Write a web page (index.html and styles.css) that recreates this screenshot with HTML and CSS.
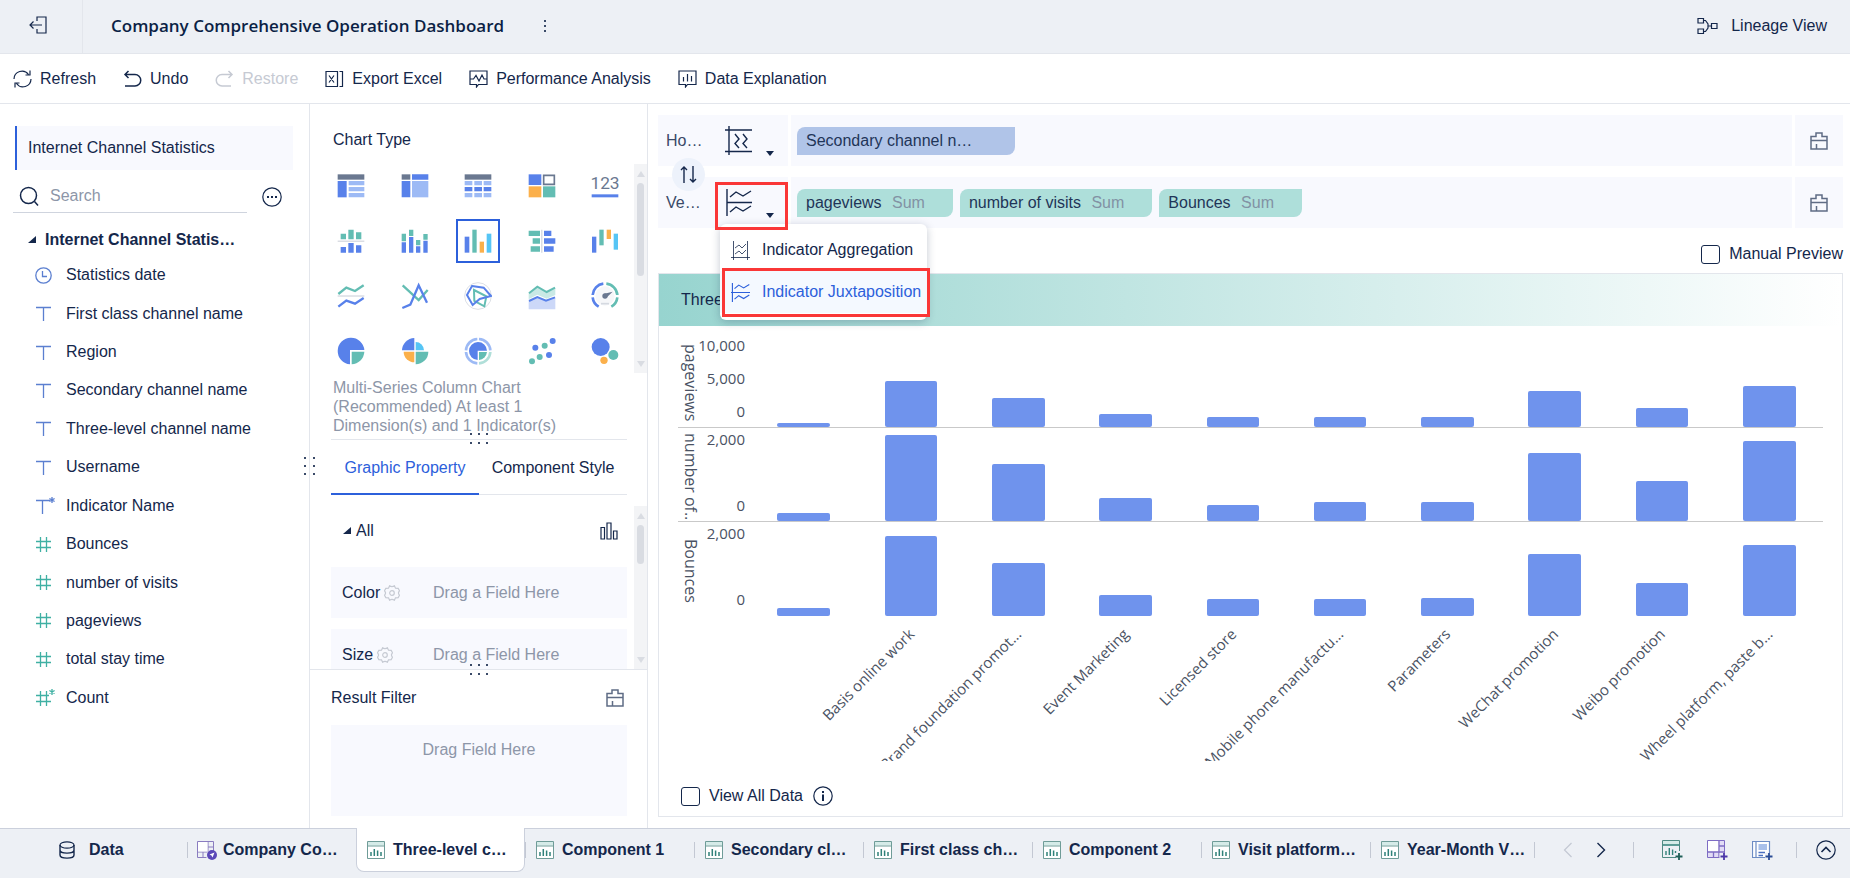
FILE: index.html
```html
<!DOCTYPE html>
<html lang="en">
	<head>
		<meta charset="utf-8">
		<title>Company Comprehensive Operation Dashboard</title>
		<link rel="stylesheet" href="styles.css">
	</head>
	<body>
		<svg class="sprite" aria-hidden="true">
			<symbol id="i-text" viewBox="0 0 17 17"><path d="M1 2.500h15M8.500 2.500V16"/></symbol>
			<symbol id="i-text-star" viewBox="0 0 20 17"><path d="M1 3.500h14M7.500 3.500V17M17 0v6M14.400 1.500l5.200 3M19.600 1.500l-5.200 3"/></symbol>
			<symbol id="i-hash" viewBox="0 0 17 17"><path d="M1 5.500h15M1 11.500h15M5.500 1v15M11.500 1v15"/></symbol>
			<symbol id="i-hash-star" viewBox="0 0 20 17"><path d="M1 6.500h13M1 12.500h15M5.500 2v15M11.500 2v15M17 0v6M14.400 1.500l5.200 3M19.600 1.500l-5.200 3"/></symbol>
			<symbol id="i-clean" viewBox="0 0 18 18"><path d="M1 4.500h5v-3.500h6v3.500h5v12.500H1zM1 8.500h16M6.500 17V12"/></symbol>
			<symbol id="i-gear" viewBox="0 0 16 16"><path d="M5.600 .8Q8 2.400 10.400 .8L11.500 3.200L14.200 3.400L15.500 5.800Q13.400 8 15.500 10.200L14.200 12.600L11.500 12.800L10.400 15.200Q8 13.600 5.600 15.200L4.500 12.800L1.800 12.600L.5 10.200Q2.600 8 .5 5.800L1.800 3.400L4.500 3.200z"/><circle cx="8" cy="8" r="2.300"/></symbol>
			<symbol id="i-component" viewBox="0 0 18 18"><path d="M.5.500h17v17H.5z" fill="#fff" stroke="#6f9c98"/><path d="M1 1h16v3.500H1z" fill="#d5ebe8" stroke="none"/><path d="M1 5h16" stroke="#6f9c98"/><path d="M4 11v4M7.300 8v7M10.600 9.500V15M14 11v4" stroke="#2f8179" stroke-width="1.500"/></symbol>
			<symbol id="i-juxta" viewBox="0 0 27 27"><path d="M2 0v27M0 13.500h27M5 8l6-5 7 4 8-5M5 23l6-5 7 4 8-5" stroke-width="1.600"/></symbol>
		</svg>

		<header class="header">
			<button class="exit" aria-label="Exit">
				<svg class="icon" width="18" height="18" viewBox="0 0 18 18"><path d="M8 5V1h9v16H8v-4M13 9H1M4.500 5.500L1 9l3.500 3.500"/></svg>
			</button>
			<h1>Company Comprehensive Operation Dashboard</h1>
			<button class="more" aria-label="More">
				<svg width="4" height="14" viewBox="0 0 4 14"><path d="M1 1h2v2H1zM1 6h2v2H1zM1 11h2v2H1z" fill="#3a4a68"/></svg>
			</button>
			<a class="lineage" href="#">
				<svg class="icon" width="21" height="18" viewBox="0 0 21 18"><path d="M1 1.500h5.500v4.500H1zM1 12h5.500v4.500H1zM14.500 6.500H20v5h-5.500zM6.500 3.500h2l2.500 3.500v4l-2.500 3.500h-2M11 9h3.500"/></svg>
				Lineage View
			</a>
		</header>

		<nav class="toolbar">
			<button><svg class="icon" width="19" height="18" viewBox="0 0 19 18"><path d="M1 9a8 8 0 0 1 14.500-4.500M18 9A8 8 0 0 1 3.500 13.500M17 .5V5h-4.500M2 17.500V13h4.500"/></svg>Refresh</button>
			<button><svg class="icon" width="19" height="18" viewBox="0 0 19 18"><path d="M5.500 1L2 4.500 5.500 8M2 4.500h10a5.700 5.700 0 0 1 0 11.500H2" stroke-width="1.500"/></svg>Undo</button>
			<button disabled><svg class="icon" width="19" height="18" viewBox="0 0 19 18"><path d="M13.500 1L17 4.500 13.500 8M17 4.500H7a5.700 5.700 0 0 0 0 11.500h9" stroke-width="1.500"/></svg>Restore</button>
			<button><svg class="icon" width="19" height="18" viewBox="0 0 19 18"><path d="M1 1.500h11.500v15H1zM14.500 1.500h3v15h-3M4 5.500l5 7M9 5.500l-5 7"/></svg>Export Excel</button>
			<button><svg class="icon" width="19" height="18" viewBox="0 0 19 18"><path d="M1 1h17v13.500h-8.500L7.500 17v-2.500H1zM1 9h3.500L7 5.500l3 5.500 3-6 2 4h3"/></svg>Performance Analysis</button>
			<button><svg class="icon" width="19" height="18" viewBox="0 0 19 18"><path d="M1 1h17v13.500h-8.500L7.500 17v-2.500H1zM5.500 7v4.500M9.500 4v7.500M13.500 6v5.500"/></svg>Data Explanation</button>
		</nav>

		<main class="main">
			<!-- data fields -->
			<aside class="fields">
				<a class="dataset" href="#">Internet Channel Statistics</a>
				<div class="search">
					<label class="search-box">
						<svg class="icon" width="21" height="21" viewBox="0 0 21 21"><circle cx="9.500" cy="9.500" r="8" stroke-width="1.500"/><path d="M15.500 15.500L19 19.500" stroke-width="1.500"/></svg>
						<input type="text" placeholder="Search" aria-label="Search">
					</label>
					<button aria-label="More options">
						<svg class="icon" width="20" height="20" viewBox="0 0 20 20"><circle cx="10" cy="10" r="9.200"/><path d="M5 9h2v2H5zM9 9h2v2H9zM13 9h2v2h-2z" fill="#14274b" stroke="none"/></svg>
					</button>
				</div>
				<h2 class="group"><svg width="8" height="8" viewBox="0 0 8 8"><path d="M8 0v7H0z" fill="#14274b"/></svg>Internet Channel Statis…</h2>
				<ul class="field-list">
					<li><svg class="dim" width="17" height="17" viewBox="0 0 17 17"><circle cx="8.500" cy="8.500" r="7.700"/><path d="M7.500 4v5.500H12"/></svg>Statistics date</li>
					<li><svg class="dim" width="17" height="17"><use href="#i-text"/></svg>First class channel name</li>
					<li><svg class="dim" width="17" height="17"><use href="#i-text"/></svg>Region</li>
					<li><svg class="dim" width="17" height="17"><use href="#i-text"/></svg>Secondary channel name</li>
					<li><svg class="dim" width="17" height="17"><use href="#i-text"/></svg>Three-level channel name</li>
					<li><svg class="dim" width="17" height="17"><use href="#i-text"/></svg>Username</li>
					<li><svg class="dim" width="20" height="17"><use href="#i-text-star"/></svg>Indicator Name</li>
					<li><svg class="num" width="17" height="17"><use href="#i-hash"/></svg>Bounces</li>
					<li><svg class="num" width="17" height="17"><use href="#i-hash"/></svg>number of visits</li>
					<li><svg class="num" width="17" height="17"><use href="#i-hash"/></svg>pageviews</li>
					<li><svg class="num" width="17" height="17"><use href="#i-hash"/></svg>total stay time</li>
					<li><svg class="num" width="20" height="17"><use href="#i-hash-star"/></svg>Count</li>
				</ul>
				<svg class="grip-side" width="11" height="18" viewBox="0 0 11 18"><path d="M0 0h2v2H0zM9 0h2v2H9zM0 8h2v2H0zM9 8h2v2H9zM0 16h2v2H0zM9 16h2v2H9z"/></svg>
			</aside>

			<!-- chart settings -->
			<section class="settings">
				<h2 class="section-title">Chart Type</h2>
				<div class="scroll-row">
					<div class="types">
						<button aria-label="Group table"><svg viewBox="0 0 84 84"><path fill="#6a7890" d="M2 7h80v16H2z"/><path fill="#5881ea" d="M2 27h27v49H2z"/><path fill="#9dbaf5" d="M35 27h47v13H35zM35 45h47v13H35zM35 63h47v13H35z"/></svg></button>
						<button aria-label="Cross table"><svg viewBox="0 0 84 84"><path fill="#6a7890" d="M2 7h26v16H2z"/><path fill="#5881ea" d="M33 7h49v16H33zM2 27h26v49H2z"/><path fill="#9dbaf5" d="M33 27h49v49H33z"/></svg></button>
						<button aria-label="Detail table"><svg viewBox="0 0 84 84"><path fill="#6a7890" d="M2 7h80v16H2z"/><path fill="#9dbaf5" d="M2 27h23v13H2zM31 27h23v13H31zM59 27h23v13H59zM2 63h23v13H2zM31 63h23v13H31zM59 63h23v13H59z"/><path fill="#5881ea" d="M2 45h23v13H2zM31 45h23v13H31zM59 45h23v13H59z"/></svg></button>
						<button aria-label="Color table"><svg viewBox="0 0 84 84"><path fill="#5881ea" d="M2 7h38v32H2z"/><path fill="#fff" stroke="#6a7890" stroke-width="5" d="M47 10h32v27H47z"/><path fill="#fbb04b" d="M2 43h38v33H2z"/><path fill="#63bdb3" d="M45 43h37v33H45z"/></svg></button>
						<button aria-label="KPI card"><svg viewBox="0 0 84 84"><text x="42" y="52" text-anchor="middle" font-size="52" fill="#6a7890">123</text><path fill="#5881ea" d="M2 67h80v9H2z"/></svg></button>

						<button aria-label="Partition column chart"><svg viewBox="0 0 84 84"><path fill="#63bdb3" d="M11 20h16v17H11zM34 8h16v29H34zM57 16h16v21H57z"/><path fill="#c8ccd6" d="M2 41h80v3H2z"/><path fill="#5881ea" d="M11 60h16v17H11zM34 48h16v29H34zM57 55h16v22H57z"/></svg></button>
						<button aria-label="Stacked column chart"><svg viewBox="0 0 84 84"><path fill="#63bdb3" d="M2 20h13v23H2zM24 8h13v19H24zM45 39h13v16H45zM67 21h13v17H67z"/><path fill="#5881ea" d="M2 46h13v31H2zM24 30h13v47H24zM45 58h13v19H45zM67 41h13v36H67z"/></svg></button>
						<button class="selected" aria-label="Multi-series column chart"><svg viewBox="0 0 84 84"><path fill="#5881ea" d="M2 29h14v48H2z"/><path fill="#63bdb3" d="M25 8h13v69H25z"/><path fill="#fbb04b" d="M47 44h13v33H47z"/><path fill="#56c5f5" d="M68 20h14v57H68z"/></svg></button>
						<button aria-label="Tornado chart"><svg viewBox="0 0 84 84"><path fill="#63bdb3" d="M2 11h34v16H2zM14 34h22v16H14zM8 58h28v16H8z"/><path fill="#c8ccd6" d="M40 8h3v69h-3z"/><path fill="#5881ea" d="M48 11h22v16H48zM48 34h34v16H48zM48 58h29v16H48z"/></svg></button>
						<button aria-label="Waterfall chart"><svg viewBox="0 0 84 84"><path fill="#5881ea" d="M3 29h13v48H3z"/><path fill="#63bdb3" d="M25 8h13v47H25z"/><path fill="#fbb04b" d="M47 8h13v28H47z"/><path fill="#56c5f5" d="M68 20h13v48H68z"/></svg></button>

						<button aria-label="Partition line chart"><svg viewBox="0 0 84 84" fill="none" stroke-width="7"><path stroke="#63bdb3" d="M4 36l24-19 26 10 26-17"/><path stroke="#c8ccd6" stroke-width="3" d="M2 42h80"/><path stroke="#5881ea" d="M4 74l24-18 26 9 26-17"/></svg></button>
						<button aria-label="Line chart"><svg viewBox="0 0 84 84" fill="none" stroke-width="7"><path stroke="#63bdb3" d="M5 10l48 44 27-30"/><path stroke="#5881ea" d="M4 78l24-10 25-58 25 52"/></svg></button>
						<button aria-label="Radar chart"><svg viewBox="0 0 84 84" fill="none" stroke-width="6"><circle cx="42" cy="42" r="40" stroke="#dcdfe6" stroke-width="3"/><path stroke="#63bdb3" d="M30 24l37 19-6 30-30-16z"/><path stroke="#5881ea" d="M24 12l35 5 22 25-34 9-21 18L9 39z"/></svg></button>
						<button aria-label="Area chart"><svg viewBox="0 0 84 84" fill="none" stroke-width="6"><path fill="#c9e9e5" d="M2 34l26-20 28 16 26-13v22L56 50 28 38 2 52z"/><path fill="#ccd8f8" d="M2 57l26-12 26 11 28-10v36H2z"/><path stroke="#63bdb3" d="M3 34l25-20 28 16 25-13"/><path stroke="#5881ea" d="M3 57l25-12 26 11 27-10"/></svg></button>
						<button aria-label="Gauge"><svg viewBox="0 0 84 84" fill="none"><circle cx="42" cy="42" r="29" fill="#f6f7f9"/><path stroke="#5881ea" stroke-width="8" d="M5 39A37 37 0 0 1 37 5M5 46a37 37 0 0 0 18 28"/><path stroke="#63bdb3" stroke-width="8" d="M46 5a37 37 0 0 1 33 34M79 46a37 37 0 0 1-18 28"/><path fill="#6a7890" d="M40 35l25-6-19 18z"/><circle cx="42" cy="42" r="8" fill="#6a7890"/><path stroke="#d5d9e0" stroke-width="5" d="M30 65h24"/></svg></button>

						<button aria-label="Pie chart"><svg viewBox="0 0 84 84"><path fill="#5881ea" d="M82 39A40 40 0 1 0 39 82V39z"/><path fill="#63bdb3" d="M44 44h38a40 40 0 0 1-38 38z"/></svg></button>
						<button aria-label="Rose chart"><svg viewBox="0 0 84 84"><path fill="#5881ea" d="M40 40V3A38 38 0 0 0 3 40z"/><path fill="#56c5f5" d="M44 40V15a25 25 0 0 1 25 25z"/><path fill="#fbb04b" d="M40 44H8a32 32 0 0 0 32 32z"/><path fill="#63bdb3" d="M44 44h38a38 38 0 0 1-38 38z"/></svg></button>
						<button aria-label="Donut chart"><svg viewBox="0 0 84 84"><g fill="none" stroke-width="8"><path stroke="#9dbaf5" d="M40 6A36 36 0 0 0 6 40M6 45a36 36 0 0 0 34 34M45 6a36 36 0 0 1 34 34"/><path stroke="#b0dfd9" d="M79 45a36 36 0 0 1-34 34"/></g><path fill="#5881ea" d="M69 41a27 27 0 1 0-28 28V41z"/><path fill="#63bdb3" d="M45 45h24a27 27 0 0 1-24 24z"/></svg></button>
						<button aria-label="Scatter chart"><svg viewBox="0 0 84 84"><g fill="#63bdb3"><circle cx="12" cy="73" r="9"/><circle cx="35" cy="60" r="9"/><circle cx="50" cy="26" r="9"/></g><g fill="#5881ea"><circle cx="22" cy="32" r="9"/><circle cx="63" cy="54" r="9"/><circle cx="74" cy="12" r="9"/></g></svg></button>
						<button aria-label="Bubble chart"><svg viewBox="0 0 84 84"><circle cx="29" cy="30" r="27" fill="#5881ea"/><circle cx="67" cy="54" r="15" fill="#63bdb3"/><circle cx="39" cy="70" r="11" fill="#fbb04b"/></svg></button>
					</div>
					<div class="scrollbar"><span class="arrow-up"></span><span class="thumb thumb-long"></span><span class="arrow-down"></span></div>
				</div>
				<div class="hint">
					<p>Multi-Series Column Chart (Recommended) At least 1 Dimension(s) and 1 Indicator(s)</p>
					<svg class="grip" width="18" height="11" viewBox="0 0 18 11"><path d="M0 0h2v2H0zM8 0h2v2H8zM16 0h2v2h-2zM0 9h2v2H0zM8 9h2v2H8zM16 9h2v2h-2z"/></svg>
				</div>
				<div class="tabs">
					<button class="active">Graphic Property</button>
					<button>Component Style</button>
				</div>
				<div class="scroll-row properties">
					<div class="property-list">
						<div class="all">
							<svg width="8" height="8" viewBox="0 0 8 8"><path d="M8 0v7H0z" fill="#14274b"/></svg>
							<span>All</span>
							<svg class="icon" width="18" height="18" viewBox="0 0 18 18"><path d="M1 5.500h3.500v11.500H1zM7 1h4v16H7zM13.500 9H17v8h-3.500z"/></svg>
						</div>
						<div class="property"><span class="name">Color <svg class="gear" width="16" height="16"><use href="#i-gear"/></svg></span><span class="drop">Drag a Field Here</span></div>
						<div class="property"><span class="name">Size <svg class="gear" width="16" height="16"><use href="#i-gear"/></svg></span><span class="drop">Drag a Field Here</span></div>
					</div>
					<div class="scrollbar"><span class="arrow-up"></span><span class="thumb"></span><span class="arrow-down"></span></div>
				</div>
				<div class="filter">
					<svg class="grip" width="18" height="11" viewBox="0 0 18 11"><path d="M0 0h2v2H0zM8 0h2v2H8zM16 0h2v2h-2zM0 9h2v2H0zM8 9h2v2H8zM16 9h2v2h-2z"/></svg>
					<div class="filter-head">
						<h2>Result Filter</h2>
						<button class="clean" aria-label="Clear filter"><svg width="18" height="18"><use href="#i-clean"/></svg></button>
					</div>
					<div class="filter-drop">Drag Field Here</div>
				</div>
			</section>

			<!-- axes and preview -->
			<section class="work">
				<div class="axis-row">
					<div class="axis-name">
						<span>Ho…</span>
						<button class="axis-mode" aria-label="Horizontal axis mode">
							<svg class="icon" width="27" height="29" viewBox="0 0 27 29"><path d="M4 0v29M0 4h27M0 25.500h27M10 8l4 5-4 4.500 4 4.500M18 8l4 5-4 4.500 4 4.500" stroke-width="1.400"/></svg>
							<span class="caret"></span>
						</button>
					</div>
					<div class="axis-fields"><span class="pill pill-dim">Secondary channel n…</span></div>
					<button class="clean" aria-label="Clear horizontal axis"><svg width="18" height="18"><use href="#i-clean"/></svg></button>
				</div>
				<div class="axis-row">
					<button class="swap" aria-label="Swap axes"><svg class="icon" width="17" height="17" viewBox="0 0 17 17"><path d="M4 17V1M1 4l3-3 3 3M13 0v16M10 13l3 3 3-3" stroke-width="1.400"/></svg></button>
					<div class="axis-name">
						<span>Ve…</span>
						<button class="axis-mode" aria-label="Vertical axis mode">
							<svg class="icon" width="27" height="27" viewBox="0 0 27 27"><path d="M2 0v27M2 13.500h25M5 8l6-5 7 4 8-5M5 23l6-5 7 4 8-5" stroke-width="1.400"/></svg>
							<span class="caret"></span>
						</button>
						<div class="menu">
							<button><svg class="icon" width="19" height="19" viewBox="0 0 19 19"><path d="M2.500 0v19M16.500 0v19M0 16.500h19M4 7l4-3 3 3 4-4M4 13l4-3 3 3 4-4" stroke-width=".8"/></svg>Indicator Aggregation</button>
							<button class="current"><svg class="icon" width="19" height="19"><use href="#i-juxta"/></svg>Indicator Juxtaposition</button>
							<span class="mark mark-item"></span>
						</div>
						<span class="mark mark-mode"></span>
					</div>
					<div class="axis-fields">
						<span class="pill">pageviews <em>Sum</em></span>
						<span class="pill">number of visits <em>Sum</em></span>
						<span class="pill">Bounces <em>Sum</em></span>
					</div>
					<button class="clean" aria-label="Clear vertical axis"><svg width="18" height="18"><use href="#i-clean"/></svg></button>
				</div>
				<div class="preview">
					<label class="check"><input type="checkbox">Manual Preview</label>
				</div>

				<div class="panel">
					<h2 class="panel-title">Three</h2>
					<div class="chart">
						<div class="chart-row">
							<span class="measure">pageviews</span>
							<div class="ticks"><span>10,000</span><span>5,000</span><span>0</span></div>
							<div class="bars">
								<i style="height: 4px"></i><i style="height: 46px"></i><i style="height: 29px"></i><i style="height: 13px"></i><i style="height: 10px"></i>
								<i style="height: 10px"></i><i style="height: 10px"></i><i style="height: 36px"></i><i style="height: 19px"></i><i style="height: 41px"></i>
							</div>
						</div>
						<div class="chart-row">
							<span class="measure">number of..</span>
							<div class="ticks"><span>2,000</span><span>0</span></div>
							<div class="bars">
								<i style="height: 8px"></i><i style="height: 86px"></i><i style="height: 57px"></i><i style="height: 23px"></i><i style="height: 16px"></i>
								<i style="height: 19px"></i><i style="height: 19px"></i><i style="height: 68px"></i><i style="height: 40px"></i><i style="height: 80px"></i>
							</div>
						</div>
						<div class="chart-row">
							<span class="measure">Bounces</span>
							<div class="ticks"><span>2,000</span><span>0</span></div>
							<div class="bars">
								<i style="height: 8px"></i><i style="height: 80px"></i><i style="height: 53px"></i><i style="height: 21px"></i><i style="height: 17px"></i>
								<i style="height: 17px"></i><i style="height: 18px"></i><i style="height: 62px"></i><i style="height: 33px"></i><i style="height: 71px"></i>
							</div>
						</div>
						<div class="categories">
							<div></div>
							<div><span>Basis online work</span></div>
							<div><span>Brand foundation promot...</span></div>
							<div><span>Event Marketing</span></div>
							<div><span>Licensed store</span></div>
							<div><span>Mobile phone manufactu...</span></div>
							<div><span>Parameters</span></div>
							<div><span>WeChat promotion</span></div>
							<div><span>Weibo promotion</span></div>
							<div><span>Wheel platform, paste b...</span></div>
						</div>
					</div>
					<div class="panel-foot">
						<label class="check"><input type="checkbox">View All Data</label>
						<svg class="icon" width="20" height="20" viewBox="0 0 20 20"><circle cx="10" cy="10" r="9.200"/><path d="M9 5h2v2H9zM9 8.500h2V15H9z" fill="#14274b" stroke="none"/></svg>
					</div>
				</div>
			</section>
		</main>

		<!-- sheets -->
		<footer class="sheets">
			<button class="data">
				<svg class="icon" width="16" height="18" viewBox="0 0 16 18"><ellipse cx="8" cy="4" rx="7" ry="3.200"/><path d="M1 4v10c0 4.200 14 4.200 14 0V4M1 9c0 4.200 14 4.200 14 0" stroke-width="1.400"/></svg>
				Data
			</button>
			<div class="sheet-list">
				<button class="first"><svg width="20" height="19" viewBox="0 0 20 19"><path d="M.5.500h16V11M.5.500v16h9M11 .5v10M.5 11h10M11 6h5.500M6 11v5.500" fill="none" stroke="#8a7cc0"/><path d="M1 1h9.500v9.500H1z" fill="#fff"/><circle cx="15" cy="14" r="5" fill="#5a48b8"/><path d="M12.500 13.500l5-2-2 5-1-2z" fill="#fff"/></svg>Company Co…</button>
				<button class="active"><svg width="18" height="18"><use href="#i-component"/></svg>Three-level c…</button>
				<button><svg width="18" height="18"><use href="#i-component"/></svg>Component 1</button>
				<button><svg width="18" height="18"><use href="#i-component"/></svg>Secondary cl…</button>
				<button><svg width="18" height="18"><use href="#i-component"/></svg>First class ch…</button>
				<button><svg width="18" height="18"><use href="#i-component"/></svg>Component 2</button>
				<button><svg width="18" height="18"><use href="#i-component"/></svg>Visit platform…</button>
				<button class="last"><svg width="18" height="18"><use href="#i-component"/></svg>Year-Month V…</button>
			</div>
			<div class="pager">
				<button disabled aria-label="Previous"><svg class="icon" width="10" height="16" viewBox="0 0 10 16"><path d="M8.500 1l-7 7 7 7"/></svg></button>
				<button aria-label="Next"><svg class="icon" width="10" height="16" viewBox="0 0 10 16"><path d="M1.500 1l7 7-7 7" stroke-width="1.400"/></svg></button>
			</div>
			<div class="adders">
				<button aria-label="Add component"><svg width="21" height="20" viewBox="0 0 21 20"><path d="M17.500 11V.5H.5v17H14" fill="none" stroke="#4f8a84"/><path d="M1 1h16v3.500H1z" fill="#d5ebe8"/><path d="M1 5h16M4 11v4M7.300 8v7M10.600 9.500V15M13.500 11v2" fill="none" stroke="#2f8179" stroke-width="1.400"/><path d="M17 13v7M13.500 16.500h7" stroke="#1f5f58" stroke-width="1.800"/></svg></button>
				<button aria-label="Add dashboard"><svg width="21" height="20" viewBox="0 0 21 20"><path d="M.5.500h17v17H.5z" fill="#e2dcf5" stroke="#7e6cc4"/><path d="M1 1h10.500v10.500H1z" fill="#fff"/><path d="M12 .5V12M.5 12h17M12 6h5.500M6.500 12v5.500M12 12v5.500" fill="none" stroke="#7e6cc4" stroke-width="1.300"/><path d="M12.500 13H21v7h-8.500z" fill="#edf0f5"/><path d="M17 13v7M13.500 16.500h7" stroke="#4a35a8" stroke-width="1.800"/></svg></button>
				<button aria-label="Add document"><svg width="21" height="20" viewBox="0 0 21 20"><path d="M.5 1.500h17v16H.5zM4 1.500v16" fill="#fff" stroke="#6d8cc4" stroke-width="1.200"/><path d="M6.500 4h8.500v6H6.500z" fill="#a9c0ea"/><path d="M6.500 12.500H13M6.500 15.500H11" stroke="#4a6fc0" stroke-width="1.400"/><path d="M13 13h8v7h-8z" fill="#edf0f5"/><path d="M17 13v7M13.500 16.500h7" stroke="#2a4c96" stroke-width="1.800"/></svg></button>
			</div>
			<button class="collapse" aria-label="Collapse"><svg class="icon" width="20" height="20" viewBox="0 0 20 20"><circle cx="10" cy="10" r="9.200"/><path d="M5.500 12L10 7.500l4.500 4.500" stroke-width="1.600"/></svg></button>
		</footer>
	</body>
</html>
```

FILE: styles.css
```css
* {
	box-sizing: border-box;
}
html, body {
	height: 100%;
	margin: 0;
}
body {
	display: flex;
	flex-direction: column;
	overflow: hidden;
	background: #fff;
	color: #14274b;
	font-family: "Liberation Sans", Arial, sans-serif;
	font-size: 16px;
	line-height: 20px;
}
h1, h2, p, ul {
	margin: 0;
	padding: 0;
}
h2 {
	font-size: 16px;
	font-weight: normal;
}
button, input {
	font: inherit;
	color: inherit;
	background: none;
	border: 0;
	padding: 0;
	margin: 0;
}
button {
	display: flex;
	align-items: center;
	white-space: nowrap;
}
a {
	color: inherit;
	text-decoration: none;
}
svg {
	flex: none;
}
.sprite {
	display: none;
}
.icon {
	fill: none;
	stroke: currentColor;
	stroke-width: 1.2;
}

/* header */
.header {
	display: flex;
	align-items: center;
	flex: none;
	height: 54px;
	padding-right: 23px;
	padding-bottom: 2px;
	background: #edf0f5;
	border-bottom: 1px solid #e3e6ec;
}
.exit {
	justify-content: center;
	width: 83px;
	height: 53px;
	margin-bottom: -2px;
	padding-right: 7px;
	padding-bottom: 3px;
	border-right: 1px solid #e3e6ec;
}
.header h1 {
	margin-left: 28px;
	font-family: "Open Sans", "Noto Sans", sans-serif;
	font-size: 17px;
	font-weight: 600;
	line-height: 24px;
	color: #0b1f45;
}
.more {
	margin-left: 39px;
}
.lineage {
	display: flex;
	align-items: center;
	gap: 13px;
	margin-left: auto;
}

/* toolbar */
.toolbar {
	display: flex;
	align-items: center;
	flex: none;
	gap: 27px;
	height: 50px;
	padding: 0 13px;
	border-bottom: 1px solid #e3e6ec;
}
.toolbar button {
	gap: 8px;
}
.toolbar button:disabled {
	color: #c6cad3;
}

.main {
	display: flex;
	flex: 1;
	min-height: 0;
}

/* field list */
.fields {
	position: relative;
	flex: none;
	width: 310px;
	padding: 22px 16px 0 13px;
	border-right: 1px solid #e3e6ec;
}
.dataset {
	display: block;
	margin-left: 2px;
	padding: 12px 0 12px 11px;
	background: #f8f9fe;
	border-left: 2px solid #2c60db;
}
.search {
	display: flex;
	align-items: center;
	gap: 15px;
}
.search-box {
	display: flex;
	align-items: center;
	gap: 10px;
	flex: 1;
	height: 43px;
	padding: 10px 0 0 6px;
	border-bottom: 1px solid #cfd4de;
}
.search > button {
	margin: 10px 11px 0 0;
}
.search input {
	width: 100%;
	min-width: 0;
	outline: 0;
}
.search input::placeholder {
	color: #8d96a8;
	opacity: 1;
}
.group {
	display: flex;
	align-items: center;
	gap: 9px;
	height: 43px;
	padding: 10px 0 0 15px;
	font-weight: bold;
}
.field-list {
	display: grid;
	grid-auto-rows: 1fr;
	height: 461px;
	padding-left: 22px;
	list-style: none;
}
.field-list li {
	display: grid;
	grid-template-columns: 31px 1fr;
	align-items: center;
}
.dim, .num {
	fill: none;
	stroke: #5b7fd0;
	stroke-width: 1.3;
}
.num {
	stroke: #3fb0a3;
}
.grip, .grip-side {
	position: absolute;
	z-index: 1;
	fill: #3a4a68;
}
.grip-side {
	top: 353px;
	right: -6px;
}
.grip {
	left: 50%;
	margin-left: -9px;
}

/* chart settings */
.settings {
	display: flex;
	flex-direction: column;
	flex: none;
	width: 338px;
	border-right: 1px solid #e3e6ec;
}
.section-title {
	padding: 26px 0 14px 23px;
}
.scroll-row {
	display: flex;
	justify-content: space-between;
	padding-left: 19px;
}
.types {
	display: grid;
	grid-template-columns: repeat(5, 44px);
	grid-auto-rows: 44px;
	justify-content: space-between;
	row-gap: 11px;
	width: 298px;
}
.types button {
	justify-content: center;
}
.types .selected {
	border: 2px solid #2c60db;
}
.types svg {
	width: 28px;
	height: 28px;
	font-family: Roboto, sans-serif;
}
.scrollbar {
	display: flex;
	flex-direction: column;
	align-items: center;
	width: 13px;
	padding: 7px 0 6px;
	background: #f3f4f6;
}
.arrow-up, .arrow-down {
	border: 4px solid transparent;
	border-top-width: 0;
	border-bottom: 6px solid #d9dce2;
}
.arrow-down {
	margin-top: auto;
	border-top: 6px solid #d9dce2;
	border-bottom-width: 0;
}
.thumb {
	width: 7px;
	height: 39px;
	margin-top: 6px;
	border-radius: 4px;
	background: #d9dce2;
}
.thumb-long {
	height: 93px;
}
.hint {
	position: relative;
	margin: 0 20px 0 21px;
	padding: 5px 2px 4px;
	border-bottom: 1px solid #e3e6ec;
	color: #8d96a8;
	line-height: 19px;
}
.hint p {
	max-width: 240px;
}
.hint .grip {
	bottom: -5px;
}
.tabs {
	display: grid;
	grid-template-columns: 1fr 1fr;
	flex: none;
	height: 55px;
	margin: 0 20px 11px 21px;
	border-bottom: 1px solid #e3e6ec;
}
.tabs button {
	justify-content: center;
	margin-bottom: -1px;
}
.tabs .active {
	color: #2c60db;
	border-bottom: 2px solid #2c60db;
	padding-top: 2px;
}
.properties {
	flex: 1;
	min-height: 0;
	padding-left: 21px;
	overflow: hidden;
}
.property-list {
	width: 296px;
}
.all {
	display: flex;
	align-items: center;
	gap: 5px;
	height: 49px;
	margin-bottom: 12px;
	padding: 0 9px 0 12px;
}
.all span {
	flex: 1;
}
.property {
	display: grid;
	grid-template-columns: 91px 1fr;
	align-items: center;
	height: 51px;
	margin-bottom: 11px;
	padding-left: 11px;
	background: #f8f9fe;
}
.name {
	display: flex;
	align-items: center;
	gap: 4px;
}
.drop {
	color: #8d96a8;
}
.gear {
	fill: none;
	stroke: #c6cad3;
	stroke-width: 1.2;
}
.filter {
	position: relative;
	flex: none;
	padding: 0 20px 12px 21px;
	border-top: 1px solid #e3e6ec;
}
.filter .grip {
	top: -6px;
}
.filter-head {
	display: flex;
	justify-content: space-between;
	align-items: center;
	height: 55px;
	padding-right: 3px;
}
.filter-drop {
	height: 91px;
	padding-top: 15px;
	background: #f8f9fe;
	color: #8d96a8;
	text-align: center;
}
.clean {
	justify-content: center;
	color: #5f6c85;
}
.clean svg {
	fill: none;
	stroke: currentColor;
	stroke-width: 1.5;
}

/* axes */
.work {
	display: flex;
	flex-direction: column;
	flex: 1;
	min-width: 0;
	padding: 11px 7px 11px 10px;
}
.axis-row {
	position: relative;
	display: grid;
	grid-template-columns: 130px 1fr 48px;
	column-gap: 3px;
	flex: none;
	height: 51px;
	margin-bottom: 11px;
}
.axis-name, .axis-fields, .axis-row .clean {
	background: #f8f9fe;
}
.axis-name {
	position: relative;
	display: flex;
	align-items: center;
	justify-content: space-between;
	padding: 0 14px 0 8px;
}
.axis-name > span {
	color: #3a4a68;
}
.axis-mode {
	gap: 14px;
}
.caret {
	border: 4px solid transparent;
	border-top: 5px solid #14274b;
	border-bottom: 0;
	margin-top: 26px;
}
.axis-fields {
	display: flex;
	align-items: center;
	gap: 7px;
	padding-left: 6px;
}
.pill {
	height: 28px;
	padding: 4px 28px 4px 9px;
	border-radius: 8px 0;
	background: #aedfda;
	color: #1f3558;
}
.pill-dim {
	width: 218px;
	background: #b0c4e8;
}
.pill em {
	margin-left: 6px;
	font-style: normal;
	color: #8292a4;
}
.swap {
	position: absolute;
	top: -19px;
	left: 14px;
	z-index: 1;
	justify-content: center;
	width: 33px;
	height: 33px;
	border-radius: 50%;
	background: #edf2fb;
}
.menu {
	position: absolute;
	top: 47px;
	left: 62px;
	z-index: 2;
	width: 207px;
	padding: 5px 0 7px;
	border-radius: 6px;
	background: #fff;
	box-shadow: 0 2px 8px rgba(20, 39, 75, 0.25);
}
.menu button {
	gap: 12px;
	width: 100%;
	height: 42px;
	padding-left: 11px;
}
.menu .current {
	background: #f4f9ff;
	color: #2c60db;
}
.mark {
	position: absolute;
	z-index: 3;
	border: 3px solid #fa3737;
}
.mark-mode {
	top: 5px;
	left: 57px;
	width: 73px;
	height: 48px;
}
.mark-item {
	top: 44px;
	left: 2px;
	width: 208px;
	height: 49px;
}
.preview {
	display: flex;
	justify-content: flex-end;
	align-items: center;
	flex: none;
	height: 38px;
	margin-top: -4px;
}
.check {
	display: flex;
	align-items: center;
	gap: 9px;
}
.check input {
	appearance: none;
	width: 19px;
	height: 19px;
	border: 1px solid #14274b;
	border-radius: 3px;
}

/* chart */
.panel {
	display: flex;
	flex-direction: column;
	flex: 1;
	min-height: 0;
	border: 1px solid #e3e6ec;
}
.panel-title {
	padding: 16px 22px;
	background: linear-gradient(to right, #97d4cf, #fff);
}
.chart {
	padding: 8px 19px 0;
	color: #4a5263;
	font-family: "Open Sans", "Noto Sans", sans-serif;
	font-size: 15px;
	line-height: 22px;
}
.chart-row {
	display: grid;
	grid-template-columns: 26px 46px 1fr;
	height: 94px;
	border-bottom: 1px solid #c9c9c9;
}
.chart-row:nth-child(3) {
	border-bottom: 0;
}
.measure {
	padding-top: 4px;
	writing-mode: vertical-rl;
	text-align: center;
	font-size: 16px;
	line-height: 26px;
	white-space: nowrap;
}
.ticks {
	display: flex;
	flex-direction: column;
	justify-content: space-between;
	align-items: flex-end;
	height: 88px;
	padding-right: 5px;
}
.bars, .categories {
	display: grid;
	grid-template-columns: repeat(10, 1fr);
}
.bars {
	align-items: end;
	justify-items: center;
}
.bars i {
	width: 49%;
	border-radius: 2px;
	background: #6f93ed;
}
.categories {
	height: 145px;
	margin-left: 72px;
	padding-top: 4px;
	clip-path: inset(0 0 0 -72px);
}
.categories div {
	display: flex;
	justify-content: flex-end;
	min-width: 0;
	padding-right: 50%;
}
.categories span {
	flex: none;
	height: 22px;
	transform: rotate(-45deg);
	transform-origin: 100% 50%;
	white-space: nowrap;
}
.panel-foot {
	display: flex;
	align-items: center;
	gap: 10px;
	margin-top: auto;
	padding: 0 22px 10px;
}

/* sheets */
.sheets {
	display: flex;
	flex: none;
	height: 50px;
	background: #edf0f5;
	box-shadow: inset 0 1px #cbd0dc;
	font-weight: bold;
}
.sheets button {
	height: 44px;
}
.sheets .data {
	gap: 14px;
	width: 187px;
	padding-left: 59px;
}
.sheet-list {
	display: flex;
	flex: 1;
	min-width: 0;
	max-width: 1347px;
}
.sheet-list button {
	position: relative;
	flex: 0 1 169px;
	min-width: 0;
	gap: 8px;
	padding-left: 11px;
}
.sheet-list button::before {
	content: "";
	position: absolute;
	left: 0;
	top: 14px;
	height: 16px;
	border-left: 1px solid #c3c8d3;
}
.sheet-list .first {
	gap: 6px;
	padding-left: 10px;
}
.sheet-list .active {
	background: #fff;
	border: 1px solid #cbd0dc;
	border-top: 0;
	border-radius: 0 0 8px 8px;
	padding-left: 10px;
}
.sheet-list .active::before {
	display: none;
}
.sheet-list .last {
	flex: 1 1 150px;
}
.pager, .adders, .collapse {
	position: relative;
	display: flex;
	align-items: center;
	height: 44px;
	flex: none;
}
.pager::before, .adders::before, .collapse::before {
	content: "";
	position: absolute;
	left: 0;
	top: 14px;
	height: 16px;
	border-left: 1px solid #c3c8d3;
}
.pager {
	gap: 23px;
	width: 99px;
	padding-left: 29px;
}
.pager button:disabled {
	color: #c3c8d3;
}
.adders {
	gap: 24px;
	width: 163px;
	padding-left: 29px;
}
.sheets .collapse {
	width: 54px;
	padding-left: 20px;
}
```
